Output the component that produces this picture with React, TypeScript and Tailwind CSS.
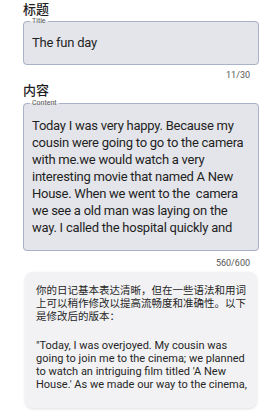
import React from 'react';

const CONTENT_LINES = [
  'Today I was very happy. Because my',
  'cousin were going to go to the camera',
  'with me.we would watch a very',
  'interesting movie that named A New',
  'House. When we went to the  camera',
  'we see a old man was laying on the',
  'way. I called the hospital quickly and',
];

const REPLY_LINES = [
  '"Today, I was overjoyed. My cousin was',
  'going to join me to the cinema; we planned',
  "to watch an intriguing film titled 'A New",
  "House.' As we made our way to the cinema,",
];

const cjk = "font-['Noto_Sans_CJK_SC',sans-serif]";

const App: React.FC = () => {
  return (
    <div className="min-h-screen bg-white pl-[23px] pr-[6px] font-['Roboto','Noto_Sans_CJK_SC',sans-serif] text-[#1f1f1f]">
      <div className={`${cjk} h-[17px] pt-[1px] text-[13px] leading-[16px] font-medium`}>标题</div>

      <fieldset className="rounded-[4px] border border-[#a9b3c8] bg-[#e4e5ea] pl-[8px] pr-[8px]">
        <legend className="ml-[-2px] px-[2px] text-[7px] leading-[8px] text-[#555]">Title</legend>
        <div className="pt-[9px] pb-[12px] text-[13px] leading-[18px] tracking-[-0.25px]">The fun day</div>
      </fieldset>
      <div className="mt-[4px] pr-[9px] text-right text-[9px] leading-[12px] text-[#555]">11/30</div>

      <div className={`${cjk} mt-[1px] h-[16px] text-[13px] leading-[16px] font-medium`}>内容</div>

      <fieldset className="mt-[1px] rounded-[4px] border border-[#a9b3c8] bg-[#e4e5ea] pl-[8px] pr-[8px]">
        <legend className="ml-[-2px] px-[2px] text-[7px] leading-[8px] text-[#555]">Content</legend>
        <div className="mt-[10px] mb-[14px] text-[13px] leading-[17px] tracking-[-0.25px]">
          {CONTENT_LINES.map((l, i) => (
            <div key={i} className="whitespace-pre">{l}</div>
          ))}
        </div>
      </fieldset>
      <div className="mt-[6px] pr-[9px] text-right text-[9px] leading-[12px] text-[#555]">560/600</div>

      <div className="mt-[3px] mx-[2px] h-[136px] rounded-[8px] bg-[#f2f2f4] pl-[11px] pr-[6px] pt-[11px] text-[10.5px] leading-[13px] text-[#262626] shadow-[0_1px_3px_rgba(0,0,0,0.12)]">
        <p className={cjk}>你的日记基本表达清晰，但在一些语法和用词上可以稍作修改以提高流畅度和准确性。以下是修改后的版本：</p>
        <div className="mt-[17px] text-[11px]">
          {REPLY_LINES.map((l, i) => (
            <div key={i} className="whitespace-pre">{l}</div>
          ))}
        </div>
      </div>
    </div>
  );
};

export default App;
